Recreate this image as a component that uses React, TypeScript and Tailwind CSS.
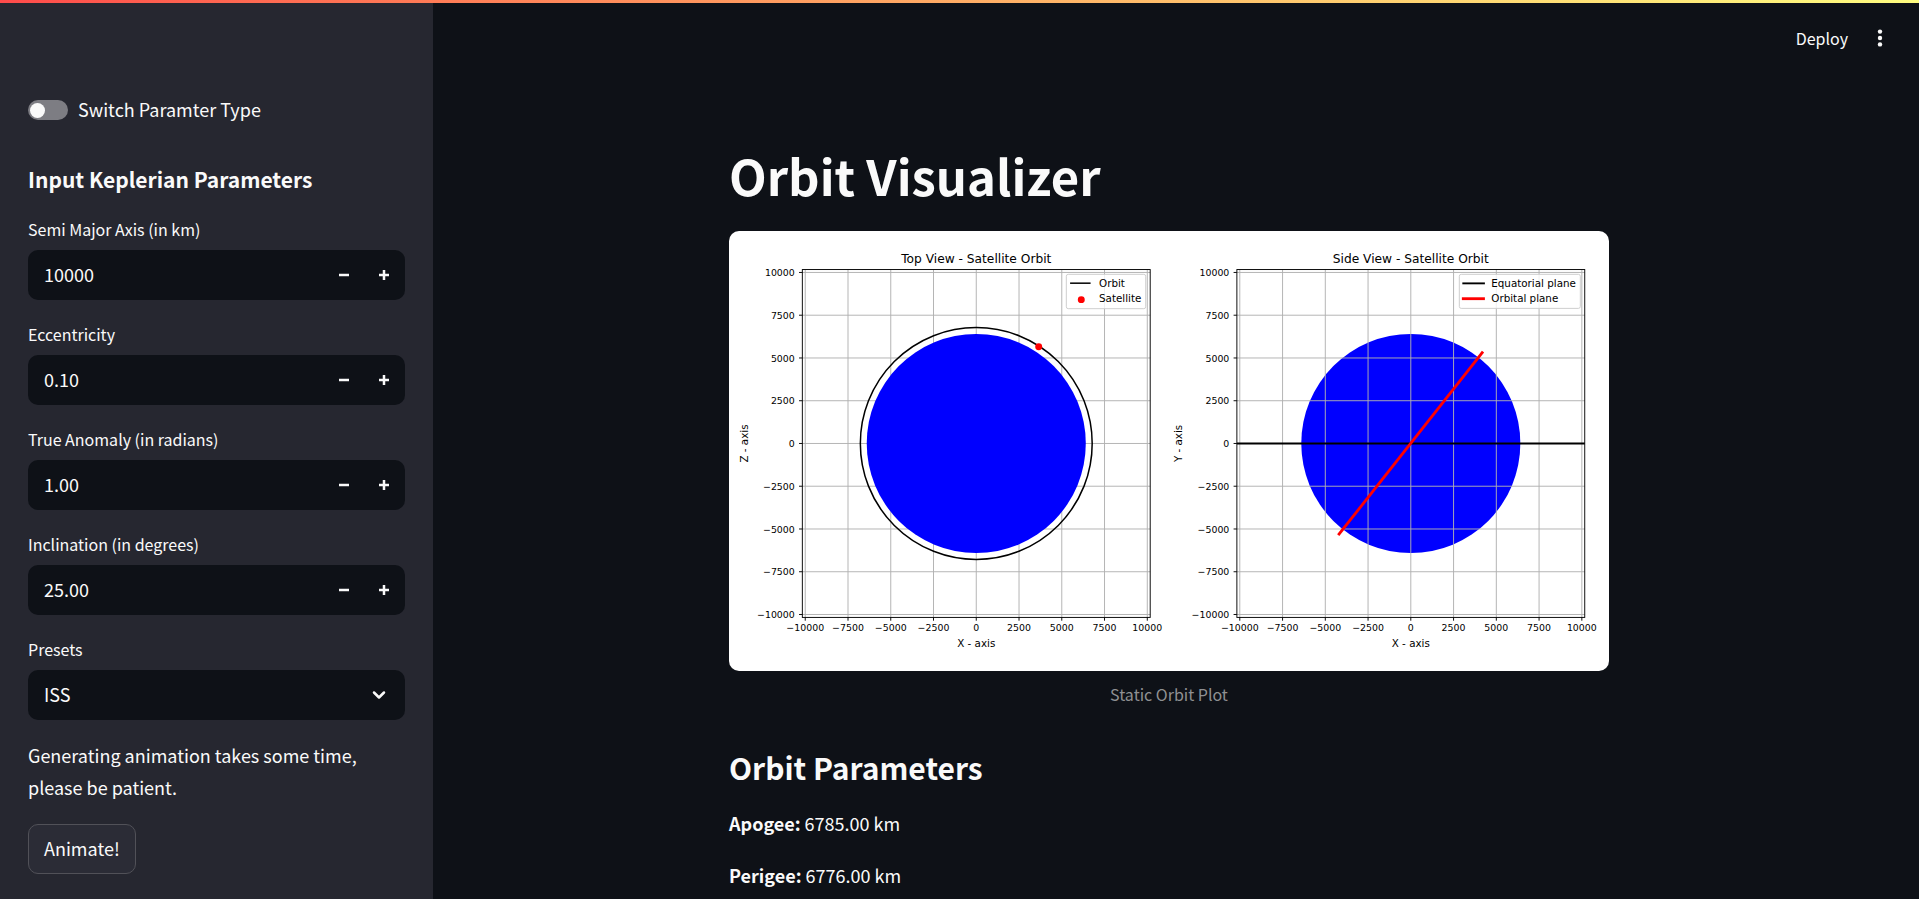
import { useState } from "react";
import type { ReactNode } from "react";

const TICKS = [-10000, -7500, -5000, -2500, 0, 2500, 5000, 7500, 10000];
const CENTER_Y = 226;
const HALF = 185;
const UNIT = 181.9 / 10000;

const formatTick = (value: number) => (value < 0 ? `\u2212${-value}` : `${value}`);

type AxesProps = {
  cx: number;
  title: string;
  yLabel: string;
  yLabelX: number;
  below?: ReactNode;
  children: ReactNode;
};

function Axes({ cx, title, yLabel, yLabelX, below, children }: AxesProps) {
  const left = cx - HALF;
  const right = cx + HALF;
  const top = CENTER_Y - HALF;
  const bottom = CENTER_Y + HALF;
  return (
    <g>
      {below}
      {TICKS.map((t) => (
        <g key={t} stroke="#b0b0b0" strokeWidth="1">
          <line x1={cx + t * UNIT} x2={cx + t * UNIT} y1={top} y2={bottom} />
          <line x1={left} x2={right} y1={CENTER_Y - t * UNIT} y2={CENTER_Y - t * UNIT} />
          <line stroke="#000" x1={cx + t * UNIT} x2={cx + t * UNIT} y1={bottom} y2={bottom + 3.5} />
          <line stroke="#000" x1={left - 3.5} x2={left} y1={CENTER_Y - t * UNIT} y2={CENTER_Y - t * UNIT} />
        </g>
      ))}
      {children}
      <rect x={left} y={top} width={right - left} height={bottom - top} fill="none" stroke="#000" strokeWidth="1" />
      {TICKS.map((t) => (
        <g key={t}>
          <text x={cx + t * UNIT} y={426} textAnchor="middle">
            {formatTick(t)}
          </text>
          <text x={left - 8} y={CENTER_Y - t * UNIT + 4} textAnchor="end">
            {formatTick(t)}
          </text>
        </g>
      ))}
      <text x={cx} y={34} fontSize="13" textAnchor="middle">
        {title}
      </text>
      <text x={cx} y={442} fontSize="11" textAnchor="middle">
        X - axis
      </text>
      <text transform={`translate(${yLabelX} ${CENTER_Y}) rotate(-90)`} fontSize="11" textAnchor="middle">
        {yLabel}
      </text>
    </g>
  );
}

function OrbitPlot() {
  return (
    <svg
      viewBox="0 0 936 468"
      role="img"
      aria-label="Static Orbit Plot"
      className="block w-full rounded-[10px] bg-white font-['DejaVu_Sans',sans-serif]"
      fontSize="10"
      fill="#000"
    >
      <Axes cx={263} title="Top View - Satellite Orbit" yLabel="Z - axis" yLabelX={20}>
        <circle cx={263} cy={CENTER_Y} r="116.5" fill="#00f" />
        <circle cx={263} cy={CENTER_Y} r="123.3" fill="none" stroke="#000" strokeWidth="1.6" />
        <circle cx="329.4" cy="123.1" r="3.7" fill="#f00" />
        <rect x="358.8" y="46.1" width="84.4" height="36.5" rx="2" fill="#fff" fillOpacity="0.8" stroke="#ccc" />
        <line x1="362.8" x2="384.6" y1="55.5" y2="55.5" stroke="#000" strokeWidth="1.6" />
        <circle cx="374.7" cy="73" r="3.7" fill="#f00" />
        <g fontSize="11">
          <text x="393.6" y="59.4">Orbit</text>
          <text x="393.6" y="75.4">Satellite</text>
        </g>
      </Axes>
      <Axes
        cx={725.2}
        title="Side View - Satellite Orbit"
        yLabel="Y - axis"
        yLabelX={481.6}
        below={<circle cx={725.2} cy={CENTER_Y} r="116.5" fill="#00f" />}
      >
        <line x1="540.2" x2="910.2" y1={CENTER_Y} y2={CENTER_Y} stroke="#000" strokeWidth="2" />
        <line x1="648" x2="802" y1="323.6" y2="128.4" stroke="#f00" strokeWidth="3" />
        <rect x="776.8" y="46.1" width="128.7" height="36.2" rx="2" fill="#fff" fillOpacity="0.8" stroke="#ccc" />
        <line x1="780" x2="804" y1="55.7" y2="55.7" stroke="#000" strokeWidth="2" />
        <line x1="779.5" x2="804" y1="72" y2="72" stroke="#f00" strokeWidth="3" />
        <g fontSize="11">
          <text x="810.8" y="59.4">Equatorial plane</text>
          <text x="810.8" y="75.4">Orbital plane</text>
        </g>
      </Axes>
    </svg>
  );
}

type NumberFieldProps = { id: string; label: string; initial: number; digits: number; step: number };

function NumberField({ id, label, initial, digits, step }: NumberFieldProps) {
  const [value, setValue] = useState(initial.toFixed(digits));
  const bump = (delta: number) => setValue((v) => (Number(v) + delta).toFixed(digits));
  return (
    <div>
      <label htmlFor={id} className="mb-1.5 block text-[16px] leading-[29px]">
        {label}
      </label>
      <div className="flex h-[50px] items-stretch rounded-[10px] bg-[#0e1117] pr-px">
        <input
          id={id}
          inputMode="decimal"
          value={value}
          onChange={(e) => setValue(e.target.value)}
          className="min-w-0 flex-1 bg-transparent pb-0.5 pl-4 text-[18px] leading-7 outline-none"
        />
        <button type="button" aria-label={`Decrease ${label}`} onClick={() => bump(-step)} className="grid w-10 place-items-center">
          <svg viewBox="0 0 8 8" className="size-2.5 fill-current">
            <path d="M0 3v2h8V3z" />
          </svg>
        </button>
        <button type="button" aria-label={`Increase ${label}`} onClick={() => bump(step)} className="grid w-10 place-items-center">
          <svg viewBox="0 0 8 8" className="size-2.5 fill-current">
            <path d="M3 0v3H0v2h3v3h2V5h3V3H5V0z" />
          </svg>
        </button>
      </div>
    </div>
  );
}

export default function App() {
  return (
    <div className="flex min-h-screen flex-col bg-[#0e1117] font-['Noto_Sans_CJK_JP','Noto_Sans_CJK_SC',sans-serif] text-[18px] text-[#fafafa]">
      <div className="h-[3px] bg-linear-to-r from-[#ff4b4b] to-[#fffd80]" />
      <div className="flex flex-1">
        <aside className="w-[433px] shrink-0 bg-[#262730] px-7 pt-[91px] pb-6">
          <label className="flex h-8 items-center gap-2.5">
            <input
              type="checkbox"
              role="switch"
              className="h-5 w-10 appearance-none rounded-full bg-[#7d7d83] before:mt-[3px] before:ml-0.5 before:block before:size-[15px] before:rounded-full before:bg-[#fafafa] checked:bg-[#ff4b4b] checked:before:ml-[23px]"
            />
            <span className="pb-0.5 leading-8">Switch Paramter Type</span>
          </label>

          <h3 className="mt-[35px] text-[21px] leading-[36px] font-bold">Input Keplerian Parameters</h3>

          <div className="mt-[18px] flex flex-col gap-5">
            <NumberField id="semi-major-axis" label="Semi Major Axis (in km)" initial={10000} digits={0} step={1} />
            <NumberField id="eccentricity" label="Eccentricity" initial={0.1} digits={2} step={0.01} />
            <NumberField id="true-anomaly" label="True Anomaly (in radians)" initial={1} digits={2} step={0.01} />
            <NumberField id="inclination" label="Inclination (in degrees)" initial={25} digits={2} step={0.01} />
            <div>
              <label htmlFor="presets" className="mb-1.5 block text-[16px] leading-[29px]">
                Presets
              </label>
              <div className="relative">
                <select
                  id="presets"
                  defaultValue="ISS"
                  className="block h-[50px] w-full appearance-none rounded-[10px] bg-[#0e1117] px-4 pb-0.5 text-[18px] leading-7 outline-none"
                >
                  <option>ISS</option>
                </select>
                <svg
                  viewBox="0 0 14 9"
                  className="pointer-events-none absolute top-1/2 right-[19px] h-[9px] w-3.5 -translate-y-1/2"
                  fill="none"
                  stroke="currentColor"
                  strokeWidth="2.5"
                  strokeLinecap="round"
                  strokeLinejoin="round"
                >
                  <path d="M2 2l5 5 5-5" />
                </svg>
              </div>
            </div>
            <div className="-mt-px flex flex-col gap-[21px]">
              <p className="leading-8">Generating animation takes some time, please be patient.</p>
              <button
                type="button"
                className="h-[50px] self-start rounded-[10px] border border-[#515158] bg-[#2b2c36] px-[15px] pb-0.5 leading-8"
              >
                Animate!
              </button>
            </div>
          </div>
        </aside>

        <div className="flex min-w-0 flex-1 flex-col pr-3.5">
          <header className="flex h-[69px] items-center justify-end gap-6 pr-[17px]">
            <button type="button" className="text-[16px] leading-8">
              Deploy
            </button>
            <button type="button" aria-label="Main menu" className="grid h-8 w-4 place-items-center">
              <svg viewBox="0 0 6 18" className="h-[18px] w-1.5 fill-current">
                <circle cx="3" cy="2.6" r="2.2" />
                <circle cx="3" cy="9" r="2.2" />
                <circle cx="3" cy="15.4" r="2.2" />
              </svg>
            </button>
          </header>
          <main className="mx-auto w-full max-w-[880px] pt-[70px]">
            <h1 className="text-[49px] leading-[66px] font-bold">Orbit Visualizer</h1>
            <figure className="mt-[23px]">
              <OrbitPlot />
              <figcaption className="mt-[7px] text-center text-[16px] leading-8 text-[#8f9092]">Static Orbit Plot</figcaption>
            </figure>
            <h2 className="mt-8 text-[30px] leading-[50px] font-bold">Orbit Parameters</h2>
            <p className="mt-[15px] leading-8">
              <strong className="font-bold">Apogee:</strong> 6785.00 km
            </p>
            <p className="mt-5 leading-8">
              <strong className="font-bold">Perigee:</strong> 6776.00 km
            </p>
          </main>
        </div>
      </div>
    </div>
  );
}
